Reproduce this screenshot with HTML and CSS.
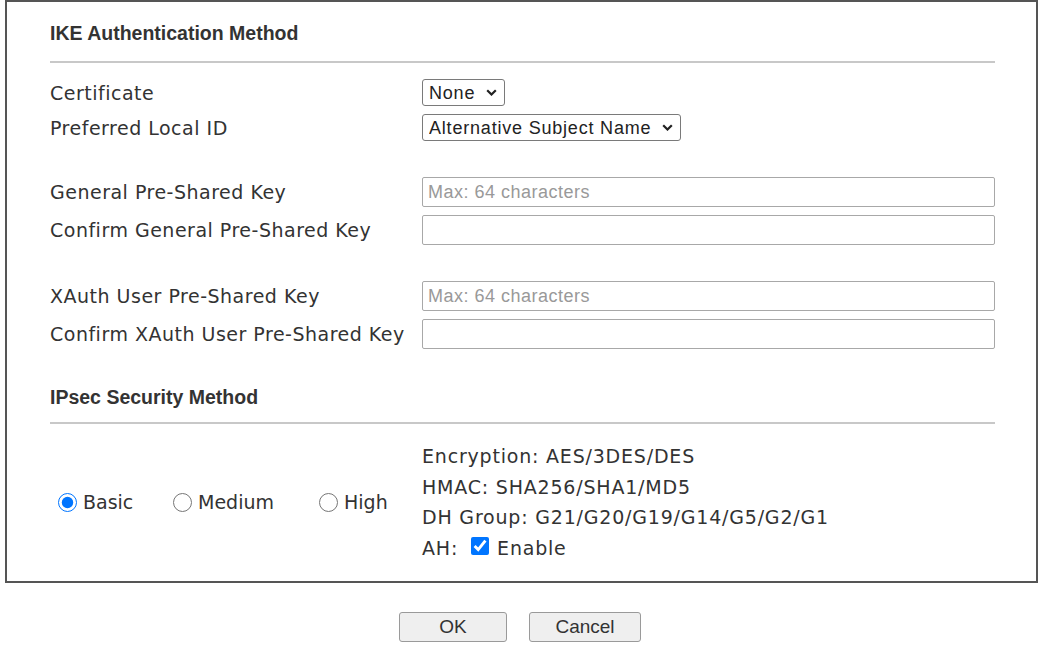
FILE: index.html
```html
<!DOCTYPE html>
<html lang="en">
<head>
    <meta charset="UTF-8">
    <meta name="viewport" content="width=device-width, initial-scale=1.0">
    <title>IPsec General Setup</title>
    <link rel="stylesheet" href="styles.css">
</head>
<body>
    <div class="panel">
        <h3 class="section-title">IKE Authentication Method</h3>
        <div class="rule"></div>

        <div class="row row-select">
            <label for="certificate">Certificate</label>
            <div class="select-wrap select-short">
                <select id="certificate">
                    <option>None</option>
                </select>
                <svg class="chevron" viewBox="0 0 11 7" width="11" height="7"><path d="M1.2 1.2 L5.5 5.5 L9.8 1.2" fill="none" stroke="#222" stroke-width="2.2"/></svg>
            </div>
        </div>
        <div class="row row-select">
            <label for="localId">Preferred Local ID</label>
            <div class="select-wrap select-long">
                <select id="localId">
                    <option>Alternative Subject Name</option>
                    <option>Subject Name</option>
                </select>
                <svg class="chevron" viewBox="0 0 11 7" width="11" height="7"><path d="M1.2 1.2 L5.5 5.5 L9.8 1.2" fill="none" stroke="#222" stroke-width="2.2"/></svg>
            </div>
        </div>

        <div class="row row-input group-start">
            <label for="psk">General Pre-Shared Key</label>
            <input type="password" id="psk" placeholder="Max: 64 characters">
        </div>
        <div class="row row-input">
            <label for="pskConfirm">Confirm General Pre-Shared Key</label>
            <input type="password" id="pskConfirm">
        </div>

        <div class="row row-input group-start">
            <label for="xauthKey">XAuth User Pre-Shared Key</label>
            <input type="password" id="xauthKey" placeholder="Max: 64 characters">
        </div>
        <div class="row row-input">
            <label for="xauthConfirm">Confirm XAuth User Pre-Shared Key</label>
            <input type="password" id="xauthConfirm">
        </div>

        <h3 class="section-title title-ipsec">IPsec Security Method</h3>
        <div class="rule rule-ipsec"></div>

        <div class="method">
            <div class="levels">
                <label class="level"><input type="radio" name="level" value="basic" checked>Basic</label>
                <label class="level"><input type="radio" name="level" value="medium">Medium</label>
                <label class="level"><input type="radio" name="level" value="high">High</label>
            </div>
            <div class="suite">
                <div class="suite-line">Encryption: AES/3DES/DES</div>
                <div class="suite-line">HMAC: SHA256/SHA1/MD5</div>
                <div class="suite-line">DH Group: G21/G20/G19/G14/G5/G2/G1</div>
                <div class="suite-line">AH:<input type="checkbox" id="ahEnable" class="ah-check" checked><label for="ahEnable">Enable</label></div>
            </div>
        </div>
    </div>

    <div class="actions">
        <button type="button" class="btn-ok">OK</button>
        <button type="button" class="btn-cancel">Cancel</button>
    </div>
</body>
</html>
```

FILE: styles.css
```css
* {
    box-sizing: border-box;
}
body {
    margin: 0;
    background: #fff;
    font-family: "DejaVu Sans", Verdana, sans-serif;
    color: #333;
}
.panel {
    margin: 0 2px 0 5px;
    border: 2px solid #555;
    padding: 20px 41px 18px 43px;
}
.section-title {
    margin: 0;
    font: bold 19.5px/22px "Liberation Sans", Arial, sans-serif;
    color: #333;
}
.title-ipsec {
    margin-top: 33px;
}
.rule {
    height: 2px;
    background: #c8c8c8;
    margin: 17px 0 12px;
}
.rule-ipsec {
    margin: 14px 0 17px;
}
.row {
    display: flex;
    align-items: center;
}
.row > label {
    flex: none;
    width: 372px;
    font-size: 19px;
    letter-spacing: 0.5px;
}
.row-select {
    height: 35px;
}
.row-input {
    height: 38px;
}
.group-start {
    margin-top: 28px;
}
.select-wrap {
    position: relative;
    height: 27px;
}
.select-short {
    width: 83px;
}
.select-long {
    width: 259px;
}
.select-wrap select {
    appearance: none;
    width: 100%;
    height: 100%;
    border: 1px solid #7a7a7a;
    border-radius: 3px;
    background: #fff;
    padding: 0 0 0 6px;
    font: 18px "Liberation Sans", Arial, sans-serif;
    letter-spacing: 0.8px;
    color: #222;
}
.chevron {
    position: absolute;
    right: 8px;
    top: 10px;
    pointer-events: none;
}
.row-input input {
    flex: 1;
    height: 30px;
    border: 1px solid #a8a8a8;
    border-radius: 2px;
    padding: 0 5px;
    font: 18px "Liberation Sans", Arial, sans-serif;
    letter-spacing: 0.5px;
}
.row-input input::placeholder {
    color: #999;
}
.method {
    display: flex;
    align-items: center;
}
.levels {
    flex: none;
    width: 372px;
    display: grid;
    grid-template-columns: 115px 146px auto;
    padding-left: 8px;
}
.level {
    display: flex;
    align-items: center;
    font-size: 19px;
}
.level input {
    width: 19px;
    height: 19px;
    margin: 0 6px 0 0;
}
.suite-line {
    font-size: 19px;
    line-height: 30.5px;
    letter-spacing: 0.8px;
}
.ah-check {
    width: 18px;
    height: 18px;
    margin: 0 8px 0 13px;
    vertical-align: baseline;
}
.actions {
    display: flex;
    justify-content: center;
    gap: 22px;
    margin-top: 29px;
}
.actions button {
    height: 30px;
    border: 1px solid #9a9a9a;
    border-radius: 3px;
    background: #efefef;
    font: 19px "Liberation Sans", Arial, sans-serif;
    color: #333;
}
.btn-ok {
    width: 108px;
}
.btn-cancel {
    width: 112px;
}
```
